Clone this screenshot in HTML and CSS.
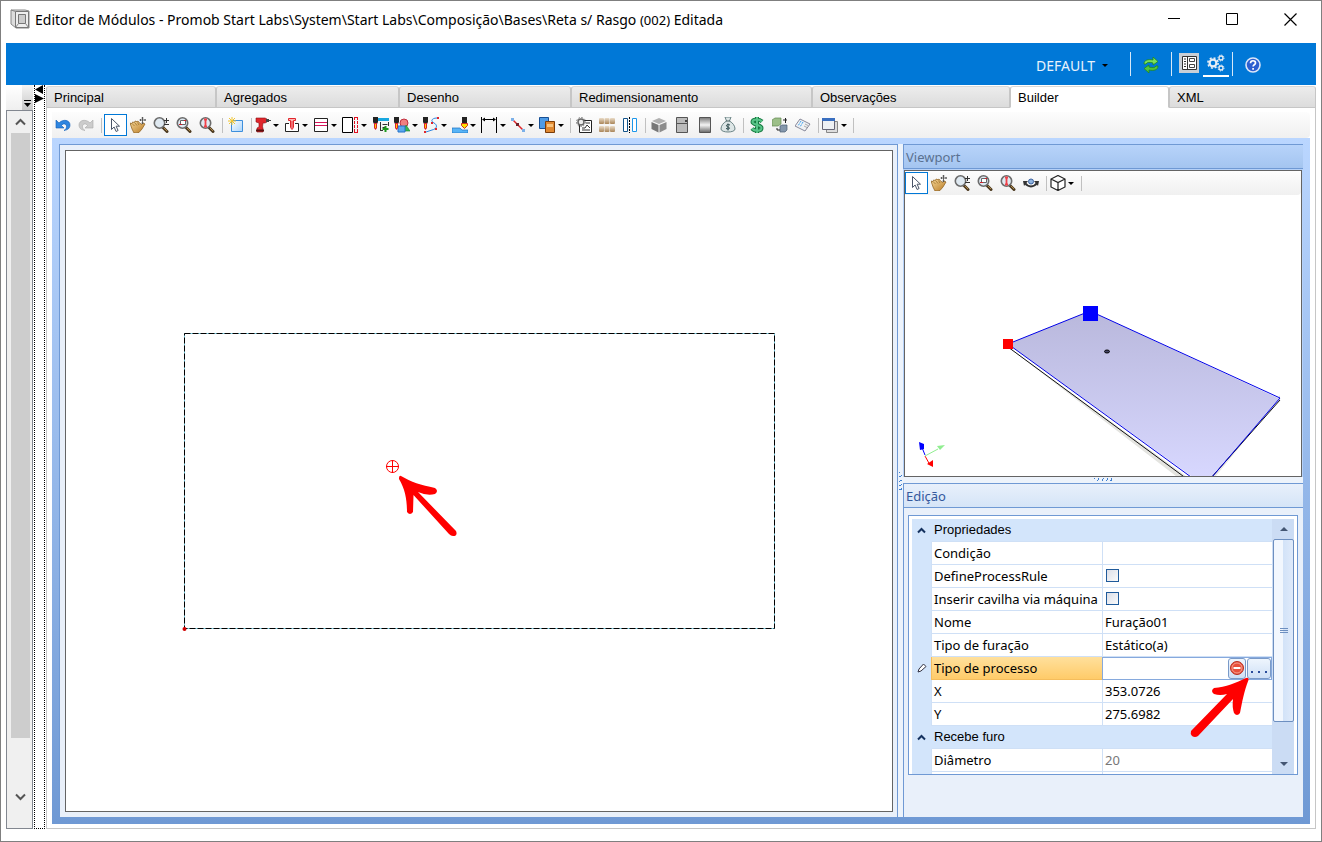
FILE: index.html
```html
<!DOCTYPE html>
<html lang="pt-BR">
<head>
  <meta charset="UTF-8">
  <meta name="viewport" content="width=device-width, initial-scale=1.0">
  <title>Editor de Módulos</title>
  <link rel="stylesheet" href="styles.css">
</head>
<body>
  <!-- ícones usados nas duas barras -->
  <svg class="defs" width="0" height="0" aria-hidden="true">
    <defs>
      <linearGradient id="plate" x1="0" y1="0" x2="0" y2="1">
        <stop offset="0" stop-color="#b9b8dc"/>
        <stop offset="1" stop-color="#d8d8ff"/>
      </linearGradient>
      <linearGradient id="metal" x1="0" y1="0" x2="0" y2="1">
        <stop offset="0" stop-color="#777"/>
        <stop offset=".5" stop-color="#f4f4f4"/>
        <stop offset="1" stop-color="#666"/>
      </linearGradient>
      <linearGradient id="skin" x1="0" y1="0" x2="1" y2="1">
        <stop offset="0" stop-color="#f7d99a"/>
        <stop offset="1" stop-color="#b87a24"/>
      </linearGradient>
      <linearGradient id="sky" x1="0" y1="0" x2="1" y2="1">
        <stop offset="0" stop-color="#fff"/>
        <stop offset="1" stop-color="#a9d4fb"/>
      </linearGradient>
      <linearGradient id="box" x1="0" y1="0" x2="0" y2="1">
        <stop offset="0" stop-color="#eadcc8"/>
        <stop offset="1" stop-color="#a98558"/>
      </linearGradient>
      <symbol id="i-cursor" viewBox="0 0 16 16">
        <path d="M4.500 1.500v11l2.600-2.500 2 4.500 2-1-2-4.300h3.400z" fill="#fff" stroke="#4a5568"/>
      </symbol>
      <symbol id="i-hand" viewBox="0 0 16 16">
        <path d="M0 6l2 .8L2.500 5l2 .5.500-1.500 2 .7 1-.7 1.500 2 2.500 1.500 1.500-1.500 1.500 1-3 5-3 3.500-5 .5L2 12z" fill="url(#skin)" stroke="#8a5a16" stroke-width=".7"/>
        <path d="M2.500 7l2 2M5 6l2 2.500M7.500 5.500l1.500 2.500" stroke="#8a5a16" stroke-width=".6"/>
        <path d="M12.500 0v7M9.500 3h6.500M11.500 1h2M11.500 6h2M10.500 2v2M15 2v2" stroke="#444" fill="none" stroke-width=".8"/>
      </symbol>
      <symbol id="i-lens" viewBox="0 0 16 16">
        <path d="M10 10.500l4 4" stroke="#4c3a20" stroke-width="3" stroke-linecap="round"/>
        <path d="M11 11l3 3" stroke="#b08a4a" stroke-width="1"/>
        <circle cx="6.500" cy="6" r="5.200" fill="#dfe9f1" stroke="#6c6c6c" stroke-width="1.600"/>
      </symbol>
      <symbol id="i-zoom" viewBox="0 0 16 16">
        <use href="#i-lens"/>
        <path d="M11 3.500h5M13.500 1v5M11 7.500h5" stroke="#333"/>
      </symbol>
      <symbol id="i-zoomwin" viewBox="0 0 16 16">
        <use href="#i-lens"/>
        <path d="M4.500 3.500h5v4h-5z" fill="#fff" stroke="#666"/>
        <path d="M3 7.500h3M8 3.500h2" stroke="#d3202a"/>
      </symbol>
      <symbol id="i-zoomh" viewBox="0 0 16 16">
        <use href="#i-lens"/>
        <path d="M6.500 2v8M5 2.500h3M5 9.500h3" stroke="#f04048" stroke-width="1.800"/>
      </symbol>
      <symbol id="i-bit" viewBox="0 0 16 16">
        <path d="M0 0h5v5l-1 2H1L0 5z" fill="#222"/>
        <path d="M1 6h3v5l-1.500 2L1 11z" fill="#d8202a"/>
        <path d="M2.500 7v4" stroke="#ffd200"/>
      </symbol>
    </defs>
  </svg>

  <div class="window">
    <header class="titlebar">
      <svg class="logo" width="20" height="20" viewBox="0 0 20 20">
        <path d="M1 1h14l4 1v17H6l-5-4z" fill="#ddd" stroke="#888"/>
        <path d="M5.500 2.500h13v16h-13z" fill="#eee" stroke="#777"/>
        <path d="M8.500 5.500h7v9h-7z" fill="#ccc" stroke="#777"/>
        <path d="M8.500 14.500l-3 4M15.500 14.500l3 4M1 1l4.500 1.500" stroke="#888"/>
      </svg>
      <h1>Editor de Módulos - Promob Start Labs\System\Start Labs\Composição\Bases\Reta s/ Rasgo <small>(002)</small> Editada</h1>
      <div class="caption">
        <button aria-label="Minimizar"><svg width="13" height="13"><path d="M0 5.500h12" stroke="#000"/></svg></button>
        <button aria-label="Maximizar"><svg width="13" height="13"><path d="M.5.500h11v11H.5z" fill="none" stroke="#000"/></svg></button>
        <button aria-label="Fechar"><svg width="13" height="13"><path d="M.5.500l12 12M12.500.500l-12 12" stroke="#000" stroke-width="1.200"/></svg></button>
      </div>
    </header>

    <div class="appbar">
      <button class="profile low">DEFAULT <i class="caret"></i></button>
      <span class="divider"></span>
      <button class="appbtn refresh low" aria-label="Atualizar">
        <svg width="18" height="16" viewBox="0 0 18 16">
          <path d="M2 7c0-4 4-5 9-4V0l5 4.500L11 8V6C8 5 5 5 4 7z" fill="#7be05a" stroke="#1f8a1c" stroke-width=".8"/>
          <path d="M16 9c0 4-4 5-9 4v3l-5-4.500L7 8v2c3 1 6 1 7-1z" fill="#52c43c" stroke="#1f8a1c" stroke-width=".8"/>
        </svg>
      </button>
      <span class="divider"></span>
      <button class="appbtn panel" aria-label="Painel">
        <svg width="20" height="20" viewBox="0 0 20 20">
          <path d="M0 0h20v20H0z" fill="#c9cfd6"/>
          <path d="M3.500 3.500h14v13h-14zM8.500 3.500v13" fill="#fff" stroke="#333"/>
          <path d="M5 6h2M5 8.500h2M5 11h2M5 13.500h2" stroke="#333"/>
          <path d="M10.500 5.500h5v3h-5zM10.500 11.500h5v3h-5z" fill="none" stroke="#444"/>
        </svg>
      </button>
      <button class="appbtn active" aria-label="Configurações">
        <svg width="18" height="18" viewBox="0 0 18 18" fill="none" stroke="#e8eef5">
          <circle cx="6" cy="9" r="3.400" stroke-width="2.200"/>
          <circle cx="6" cy="9" r="5.100" stroke-width="1.600" stroke-dasharray="2 2.005"/>
          <circle cx="14" cy="4" r="2" stroke-width="1.300"/>
          <circle cx="14" cy="4" r="3" stroke-dasharray="1.200 1.150"/>
          <circle cx="14" cy="14" r="2" stroke-width="1.300"/>
          <circle cx="14" cy="14" r="3" stroke-dasharray="1.200 1.150"/>
        </svg>
      </button>
      <span class="divider"></span>
      <button class="appbtn low" aria-label="Ajuda">
        <svg width="16" height="16" viewBox="0 0 16 16">
          <circle cx="8" cy="8" r="7" fill="#2d5fd0" stroke="#dce6f8" stroke-width="1.600"/>
          <path d="M5.500 6.200c0-3.200 5-3.200 5-.3 0 1.800-2.400 1.800-2.400 3.600M8.100 11v1.800" fill="none" stroke="#fff" stroke-width="1.700"/>
        </svg>
      </button>
    </div>

    <div class="body">
      <aside class="sidebar">
        <div class="side-top"><button aria-label="Opções"><svg width="9" height="9"><path d="M1 1.500h7" stroke="#000"/><path d="M1 4h7L4.500 8z"/></svg></button></div>
        <div class="side-scroll">
          <button aria-label="Subir"><svg width="11" height="8"><path d="M1 6.500l4.500-4.500L10 6.500" fill="none" stroke="#555" stroke-width="2"/></svg></button>
          <div class="side-thumb"></div>
          <button aria-label="Descer"><svg width="11" height="8"><path d="M1 1.500L5.500 6 10 1.500" fill="none" stroke="#555" stroke-width="2"/></svg></button>
        </div>
      </aside>
      <div class="side-splitter">
        <svg width="9" height="18"><path d="M8 0v9L0 4.500zM0 9v9l9-4.500z"/></svg>
      </div>

      <main class="main">
        <nav class="tabs">
          <button>Principal</button>
          <button>Agregados</button>
          <button>Desenho</button>
          <button>Redimensionamento</button>
          <button>Observações</button>
          <button class="current">Builder</button>
          <button>XML</button>
        </nav>

        <div class="page">
          <div class="toolbar">
            <button aria-label="Desfazer"><svg width="16" height="16"><path d="M1 3v8h8L6.500 8.500c1.500-2.500 5-2 5 1 0 2-1 3-2.500 4 4-.5 6-2.500 6-5.500 0-5-7-6.500-11-2z" fill="#2f86e0" stroke="#0d5cb6" stroke-width=".6"/></svg></button>
            <button aria-label="Refazer"><svg width="16" height="16"><path d="M15 3v8H7l2.500-2.500c-1.500-2.500-5-2-5 1 0 2 1 3 2.500 4-4-.5-6-2.500-6-5.500 0-5 7-6.500 11-2z" fill="#ccc" stroke="#aaa" stroke-width=".6"/></svg></button>
            <span class="sep"></span>
            <button class="pressed" aria-label="Selecionar"><svg width="16" height="16"><use href="#i-cursor"/></svg></button>
            <button aria-label="Mover"><svg width="16" height="16"><use href="#i-hand"/></svg></button>
            <button aria-label="Zoom"><svg width="16" height="16"><use href="#i-zoom"/></svg></button>
            <button aria-label="Zoom janela"><svg width="16" height="16"><use href="#i-zoomwin"/></svg></button>
            <button aria-label="Zoom total"><svg width="16" height="16"><use href="#i-zoomh"/></svg></button>
            <span class="sep"></span>
            <button aria-label="Novo"><svg width="16" height="16"><path d="M3.500 3.500h11v11h-11z" fill="url(#sky)" stroke="#3d8fdc"/><path d="M4 0v8M0 4h8M1 1l6 6M7 1L1 7" stroke="#f0c530"/></svg></button>
            <span class="sep"></span>
            <button class="drop" aria-label="Furação"><svg width="16" height="16"><path d="M1 1h9l2 1v3l-2 1H8l-.5 4 .5 1v4H2v-4l2-1V6L1 5z" fill="#e0262c" stroke="#8c1014" stroke-width=".6"/><path d="M11 2h3v3h-3z" fill="#444"/><path d="M14 3.500h2" stroke="#444"/><path d="M1 13.500h8" stroke="#5a1010" stroke-width="2"/></svg><i class="caret"></i></button>
            <button class="drop" aria-label="Cavilha"><svg width="16" height="16"><path d="M5 6.500H1.500v8h13v-8H11" fill="#fff" stroke="#222"/><path d="M4.500 1.500h7v2h-2v7l-1.500 2-1.500-2v-7h-2z" fill="#ffb4b4" stroke="#e0262c"/><path d="M8 4v7" stroke="#e0262c"/></svg><i class="caret"></i></button>
            <button class="drop" aria-label="Camadas"><svg width="16" height="16"><path d="M1.500 1.500h13v13h-13z" fill="#fff" stroke="#222"/><path d="M2 5.500h12M2 8.500h12" stroke="#d6145a"/></svg><i class="caret"></i></button>
            <button class="drop" aria-label="Borda"><svg width="17" height="16"><path d="M.5.500h10v15H.5z" fill="#fff" stroke="#000"/><path d="M12.500 0v16M15.500 0v16" stroke="#e01020" stroke-dasharray="3 1"/><path d="M12 .5h4M12 15.500h4" stroke="#e01020"/></svg><i class="caret"></i></button>
            <button aria-label="Adicionar usinagem"><svg width="16" height="16"><path d="M5 1h11v3H5z" fill="#18a8e0"/><path d="M7.500 5v9M7 13.500h3M9.500 7.500h5M9.500 10.500h3M15.500 5v4" stroke="#333" fill="none"/><path d="M12.500 9v6M9.500 12h6" stroke="#1c9a1c" stroke-width="2"/><use href="#i-bit" width="16" height="16"/></svg></button>
            <button class="drop" aria-label="Formas"><svg width="16" height="16"><circle cx="10" cy="6" r="4" fill="#f08080" stroke="#c03040"/><path d="M12 8l4 6H9z" fill="#38b850" stroke="#168030" stroke-width=".6"/><path d="M4 9h7v6H4z" fill="#5aa9ee" stroke="#2270c8"/><use href="#i-bit" width="16" height="16"/></svg><i class="caret"></i></button>
            <button class="drop" aria-label="Caminho"><svg width="16" height="16"><path d="M14 1c-5 0-7 3-3 5s3 6-2 7l-6 2" fill="none" stroke="#2f86e0"/><path d="M14 0h2v2h-2zM12 11h2v2h-2zM1 14h2v2H1zM8 5h2v2H8z" fill="#e0262c"/><use href="#i-bit" width="16" height="16"/></svg><i class="caret"></i></button>
            <button class="drop" aria-label="Rebaixo"><svg width="16" height="16"><path d="M0 11h8l2 2h6v3H0z" fill="#58b4f6" stroke="#1b70c0" stroke-width=".7"/><path d="M10 0h5v6h-5z" fill="#222"/><path d="M9.500 6.500h6v2l-3 3-3-3z" fill="#ffe000" stroke="#d03020"/></svg><i class="caret"></i></button>
            <button class="drop" aria-label="Cota"><svg width="17" height="16"><path d="M.5 0v16M15.500 0v16M2 2.500h12" stroke="#000"/><path d="M1 2.500l3-2v4zM15 2.500l-3-2v4z"/></svg><i class="caret"></i></button>
            <button class="drop" aria-label="Linha"><svg width="16" height="16"><path d="M3 3l10 10" stroke="#e0262c" stroke-width="1.500"/><path d="M1 1h3v3H1zM12 12h3v3h-3z" fill="#7bb0e8"/><path d="M6 6h3v3H6z" fill="#702028"/></svg><i class="caret"></i></button>
            <button class="drop" aria-label="Copiar"><svg width="17" height="16"><path d="M.5.500h9v11h-9z" fill="#4e9be6" stroke="#174f94"/><path d="M6.500 4.500h9v11h-9z" fill="#e08830" stroke="#7a3c08"/><path d="M8 7h6v3H8z" fill="#f7c27c"/></svg><i class="caret"></i></button>
            <span class="sep"></span>
            <button aria-label="Configurar relatório"><svg width="16" height="16"><path d="M3.500 3.500h12v12h-12z" fill="#fff" stroke="#222"/><path d="M6 13h8M6 11h3l2-3 3 3M10 6h4" stroke="#333" fill="none"/><circle cx="5" cy="5" r="3" fill="#eee" stroke="#666" stroke-width="1.500"/><circle cx="5" cy="5" r="4.500" fill="none" stroke="#777" stroke-dasharray="1.500 1.500"/></svg></button>
            <button aria-label="Componentes"><svg width="16" height="16" fill="url(#box)"><rect y="1" width="5" height="6" rx="1"/><rect x="5.500" y="1" width="5" height="6" rx="1"/><rect x="11" y="1" width="5" height="6" rx="1"/><rect y="9" width="5" height="6" rx="1"/><rect x="5.500" y="9" width="5" height="6" rx="1"/><rect x="11" y="9" width="5" height="6" rx="1"/></svg></button>
            <button aria-label="Espelhar"><svg width="16" height="16"><path d="M1.500 1.500h4v13h-4z" fill="#fff" stroke="#14558c"/><path d="M10.500 1.500h4v13h-4z" fill="#fff" stroke="#1c97ea"/><path d="M7.500 0v16" stroke="#000" stroke-dasharray="2 1"/></svg></button>
            <span class="sep"></span>
            <button aria-label="Módulo 3D"><svg width="16" height="16"><path d="M8 1l7 3-7 3-7-3z" fill="#b0b0b0"/><path d="M.5 5L7.500 8v7.500L.5 12z" fill="#777"/><path d="M15.500 5l-7 3v7.500l7-3.500z" fill="#8c8c8c"/></svg></button>
            <button aria-label="Porta"><svg width="16" height="16"><path d="M2.500.500h11v15h-11z" fill="#bbb" stroke="#555"/><path d="M3 6.500h10" stroke="#555"/><path d="M11 3h2v2h-2z" fill="#444"/></svg></button>
            <button aria-label="Cilindro"><svg width="16" height="16"><path d="M2.500.500h11v15h-11z" fill="url(#metal)" stroke="#555"/></svg></button>
            <button aria-label="Custo"><svg width="16" height="16"><path d="M5 0h6L9.500 4C13 6 15 9 15 12c0 4-14 4-14 0 0-3 2-6 5.500-8z" fill="#dde6e6" stroke="#6a8284"/><path d="M6 4h4" stroke="#486062"/><path d="M10 8c-4-1.500-4.500 1.500-2 2s2 3-2 1.500M8 6.500v7" fill="none" stroke="#28464a"/></svg></button>
            <span class="sep"></span>
            <button aria-label="Preço"><svg width="16" height="16"><path d="M13 4.500C10 1.500 3.500 2 3.500 5s9 2.500 9 6-7 3.500-9.500.5M8 0v16" fill="none" stroke="#167a40" stroke-width="4"/><path d="M13 4.500C10 1.500 3.500 2 3.500 5s9 2.500 9 6-7 3.500-9.500.5M8 0v16" fill="none" stroke="#58c488" stroke-width="2"/></svg></button>
            <button aria-label="Trocar"><svg width="16" height="16"><path d="M0 3l3-2h6v6L6 9H0z" fill="#9cbf88" stroke="#638850" stroke-width=".7"/><path d="M8 9l2-1h5v5l-2 2H8z" fill="#8497ac" stroke="#4c5e72" stroke-width=".7"/><path d="M11 3h4M13.500 1v5M5 11v2h3" stroke="#222" fill="none"/></svg></button>
            <button aria-label="Etiqueta"><svg width="16" height="16"><path d="M5 2l10 5-5 7L0 9z" fill="#eef1f4" stroke="#889"/><path d="M6 4l-3 5M8 5l-3 5" stroke="#39a0f0" stroke-dasharray="2 1"/><path d="M10 7l3 1.500M9 9l3 1.500" stroke="#aaa"/></svg></button>
            <span class="sep"></span>
            <button class="drop" aria-label="Janelas"><svg width="17" height="16"><path d="M4.500 4.500h11v11h-11z" fill="#ddd" stroke="#888"/><path d="M.5 1.500h12v11H.5z" fill="#eef1f5" stroke="#667"/><path d="M0 1h13v3H0z" fill="#3a6fc0"/></svg><i class="caret"></i></button>
            <span class="sep"></span>
          </div>

          <div class="workspace">
            <section class="document">
              <div class="canvas">
                <svg width="100%" height="100%">
                  <path d="M118.500 182.500h590v295h-590z" fill="none" stroke="#7fd0e4"/>
                  <path d="M118.500 182.500h590v295h-590z" fill="none" stroke="#000" stroke-dasharray="6 2"/>
                  <circle cx="118.500" cy="478" r="2" fill="#d00000"/>
                  <g fill="none" stroke="#f00">
                    <circle cx="326.500" cy="315.500" r="6"/>
                    <path d="M320 315.500h13M326.500 309v13"/>
                  </g>
                  <path d="M335 325C345 331 355 334 369 337q4 3 0 6-8 2-17-2l38 39q2 5-3 5-2 0-4-2l-35.500-39-.5 17q-3 4-6 0C341 348 339 338 333 328q0-4 2-3z" fill="#f00"/>
                </svg>
              </div>
            </section>

            <div class="split-v"><i class="grip"></i></div>

            <div class="docked">
              <section class="viewport">
                <h2>Viewport</h2>
                <div class="view">
                  <div class="toolbar">
                    <button class="pressed" aria-label="Selecionar"><svg width="16" height="16"><use href="#i-cursor"/></svg></button>
                    <button aria-label="Mover"><svg width="16" height="16"><use href="#i-hand"/></svg></button>
                    <button aria-label="Zoom"><svg width="16" height="16"><use href="#i-zoom"/></svg></button>
                    <button aria-label="Zoom janela"><svg width="16" height="16"><use href="#i-zoomwin"/></svg></button>
                    <button aria-label="Zoom total"><svg width="16" height="16"><use href="#i-zoomh"/></svg></button>
                    <button aria-label="Órbita"><svg width="16" height="16"><path d="M2 8c3 4.500 9 4.500 12 0" fill="none" stroke="#333" stroke-width="2"/><path d="M0 6l5 0-4 5zM16 6h-5l4 5z" fill="#333"/><circle cx="8" cy="6.500" r="2.500" fill="#8fb4e0" stroke="#3b62a0"/></svg></button>
                    <span class="sep"></span>
                    <button class="drop" aria-label="Vista"><svg width="16" height="16"><path d="M8 .5l7 3.500v8l-7 3.500L1 12V4zM1 4l7 3.500L15 4M8 7.500v8" fill="#fff" stroke="#222" stroke-width="1.200"/></svg><i class="caret"></i></button>
                    <span class="sep"></span>
                  </div>
                  <svg class="scene" width="100%" height="100%">
                    <path d="M103 152l182 132h20l70-84v3l-70 85h-25z" fill="#e4e4e0"/>
                    <path d="M103 149l82-33 190 88-72 82h-10z" fill="url(#plate)"/>
                    <path d="M103 152l179 132M375 205l-70 79" fill="none" stroke="#111"/>
                    <path d="M286 282L103 149l82-33 190 87-68 79" fill="none" stroke="#0000e8"/>
                    <path d="M178 111h15v15h-15z" fill="#00f"/>
                    <path d="M98 144h10v10H98z" fill="#f00"/>
                    <ellipse cx="202" cy="156.500" rx="2.500" ry="1.500" fill="#446" stroke="#000"/>
                    <path d="M20 260l-4-10" stroke="#00f"/><path d="M14 247l5 2v5l-4 1z" fill="#00f"/>
                    <path d="M20 261l5 9" stroke="#f00"/><path d="M28 265v7l-6-3z" fill="#f00"/>
                    <path d="M20 261l13-7" stroke="#90ee90"/><path d="M40 250l-5 5-3-4z" fill="#90ee90"/>
                  </svg>
                </div>
              </section>

              <div class="split-h"><i class="grip"></i></div>

              <section class="edit">
                <h2>Edição</h2>
                <div class="edit-body">
                  <div class="props">
                    <div class="props-list">
                      <table>
                        <colgroup><col class="gutter"><col class="name"><col></colgroup>
                        <tbody>
                          <tr class="group"><td><svg width="9" height="7"><path d="M1 5.500l3.500-3.500L8 5.500" fill="none" stroke="#15325f" stroke-width="2"/></svg></td><th colspan="2">Propriedades</th></tr>
                          <tr><td></td><th><label for="cond">Condição</label></th><td><input id="cond" type="text"></td></tr>
                          <tr><td></td><th><label for="rule">DefineProcessRule</label></th><td><input id="rule" type="checkbox"></td></tr>
                          <tr><td></td><th><label for="dowel">Inserir cavilha via máquina</label></th><td><input id="dowel" type="checkbox"></td></tr>
                          <tr><td></td><th><label for="nome">Nome</label></th><td><input id="nome" type="text" value="Furação01"></td></tr>
                          <tr><td></td><th><label for="tipo">Tipo de furação</label></th><td><input id="tipo" type="text" value="Estático(a)"></td></tr>
                          <tr class="selected">
                            <td><svg width="10" height="10"><path d="M1 9l1-3 4.500-5L9 3.500 4 8z" fill="#fff" stroke="#334"/></svg></td>
                            <th><label for="proc">Tipo de processo</label></th>
                            <td>
                              <div class="editor">
                                <input id="proc" type="text">
                                <button class="clear" aria-label="Remover"><svg width="14" height="14"><circle cx="7" cy="7" r="6.500" fill="#e8503c" stroke="#b83020"/><circle cx="7" cy="7" r="5" fill="none" stroke="#f7a090"/><path d="M3.500 7h7" stroke="#fff" stroke-width="2"/></svg></button>
                                <button class="more" aria-label="Procurar"><svg width="18" height="16"><path d="M1 11h2v2H1zM8 11h2v2H8zM15 11h2v2h-2z" fill="#2a4c9c"/></svg></button>
                                <svg class="pointer" width="64" height="64"><path d="M60 3q3-1 2.500 2C58 16 56 28 54 38q-3 4-6 0-2-6-1-14L12 61q-3 2-6 0-2-2-1-5l36-37q-7 2-13 0-4-3 0-6C40 12 50 8 60 3z" fill="#f00"/></svg>
                              </div>
                            </td>
                          </tr>
                          <tr><td></td><th><label for="px">X</label></th><td><input id="px" type="text" value="353.0726"></td></tr>
                          <tr><td></td><th><label for="py">Y</label></th><td><input id="py" type="text" value="275.6982"></td></tr>
                          <tr class="group"><td><svg width="9" height="7"><path d="M1 5.500l3.500-3.500L8 5.500" fill="none" stroke="#15325f" stroke-width="2"/></svg></td><th colspan="2">Recebe furo</th></tr>
                          <tr><td></td><th><label for="diam">Diâmetro</label></th><td><input id="diam" type="text" value="20" disabled></td></tr>
                          <tr><td></td><th></th><td></td></tr>
                        </tbody>
                      </table>
                    </div>
                    <div class="props-scroll">
                      <button aria-label="Subir"><svg width="8" height="4"><path d="M0 4l4-4 4 4z" fill="#445673"/></svg></button>
                      <div class="props-thumb"><i></i></div>
                      <button aria-label="Descer"><svg width="8" height="4"><path d="M0 0l4 4 4-4z" fill="#445673"/></svg></button>
                    </div>
                  </div>
                </div>
              </section>
            </div>
          </div>
        </div>
      </main>
    </div>
  </div>
</body>
</html>
```
FILE: styles.css
```css
* { box-sizing: border-box; margin: 0; padding: 0; }

body {
  font-family: 'Noto Sans', sans-serif;
  font-size: 13px;
  color: #000;
  background: #fff;
}

button {
  font: inherit;
  color: inherit;
  background: none;
  border: none;
  display: flex;
  align-items: center;
  justify-content: center;
}

svg { display: block; flex: none; }
.defs { position: absolute; }

.window {
  display: flex;
  flex-direction: column;
  height: 100vh;
  min-height: 640px;
  padding: 0 5px 12px;
  border: 1px solid #7f7f7f;
}

/* barra de título */
.titlebar {
  display: flex;
  align-items: center;
  height: 42px;
  padding: 0 4px 6px;
}

.titlebar h1 {
  flex: 1;
  margin-left: 5px;
  font-size: 14px;
  font-weight: normal;
  white-space: nowrap;
}

.titlebar small { font-size: 13px; }

.caption { display: flex; }
.caption button { width: 58px; height: 30px; }
.caption button:last-child { width: 46px; margin-left: 6px; margin-right: -1px; }

/* barra azul */
.appbar {
  display: flex;
  align-items: center;
  justify-content: flex-end;
  height: 42px;
  padding-right: 50px;
  background: #0078d7;
  color: #fff;
}

.profile { font-size: 14px; gap: 7px; margin-right: 22px; color: #e8f2fc; }

.divider { width: 1px; height: 24px; background: #d6e8f8; }

.appbtn { width: 26px; height: 26px; margin-left: 1px; border-bottom: 2px solid transparent; }
.divider + .appbtn { margin-left: 7px; }
.divider + .panel { margin-left: 4px; }
.refresh { margin-right: 7px; }
.active { margin-right: 3px; border-bottom-color: #fff; }
.low { padding-top: 3px; }

.caret {
  border: 3px solid transparent;
  border-top-color: #000;
  border-bottom: none;
}

/* coluna esquerda */
.body { display: flex; flex: 1; min-height: 0; }

.sidebar { display: flex; flex-direction: column; width: 27px; }

.side-top {
  display: flex;
  justify-content: flex-end;
  height: 25px;
  background: linear-gradient(#fff, #efefef);
}
.side-top button { width: 11px; padding-top: 12px; background: linear-gradient(#f4f4f4, #c8c8c8); }

.side-scroll {
  display: flex;
  flex-direction: column;
  flex: 1;
  padding-left: 4px;
  padding-right: 2px;
  border: 1px solid #828790;
  background: #f0f0f0;
}
.side-scroll button { height: 22px; }
.side-scroll button:last-child { margin-bottom: 20px; }
.side-thumb { flex: 1; margin-bottom: 48px; background: #cdcdcd; }

.side-splitter {
  width: 11px;
  margin: 0 1px;
  border: 1px dotted #000;
  border-top: none;
}

/* abas */
.main { display: flex; flex-direction: column; flex: 1; min-width: 0; }

.tabs {
  display: grid;
  grid-template-columns: 170fr 183fr 172fr 241fr 198fr 159fr 147fr;
  height: 23px;
  padding-top: 1px;
  font-family: 'Liberation Sans', sans-serif;
  font-size: 13px;
}

.tabs button {
  justify-content: flex-start;
  padding-left: 7px;
  padding-top: 1px;
  border: 1px solid #c6c6c6;
  border-top-color: #d8d8d8;
  border-radius: 3px 3px 0 0;
  background: linear-gradient(#ececec, #dcdcdc);
}
.tabs .current { background: #fff; border-bottom-color: #fff; }

.page {
  display: flex;
  flex-direction: column;
  flex: 1;
  min-height: 0;
  padding: 4px 5px;
  border: 1px solid #c6c6c6;
  border-top: none;
}

/* barras de ferramentas */
.toolbar {
  display: flex;
  align-items: center;
  height: 26px;
  border-radius: 0 4px 4px 0;
  background: linear-gradient(#fdfdfd, #f0f0f0);
}
.toolbar button { width: 23px; height: 22px; padding-right: 1px; }
.toolbar .drop { width: 29px; gap: 2px; padding: 0 0 0 1px; justify-content: flex-start; }
.toolbar .pressed { border: 1px solid #0078d7; background: #fff; }
.toolbar .sep { width: 1px; height: 15px; margin: 0 2px 0 3px; background: #c0c0c0; }

/* área de trabalho */
.workspace {
  display: flex;
  flex: 1;
  min-height: 0;
  padding: 6px 7px 7px;
  background: linear-gradient(#bad6ff, #6f99d4);
}

.document {
  flex: 1;
  min-width: 0;
  padding: 5px 4px 5px 5px;
  border: 1px solid #6f99d4;
  border-bottom: none;
  background: #e9f0fa;
}
.canvas { height: 100%; border: 1px solid #646464; background: #fff; }

.split-v, .split-h {
  display: flex;
  align-items: center;
  justify-content: center;
  background: #edf3fb;
}
.split-v { width: 5px; }
.split-h { height: 6px; }

.grip {
  width: 18px;
  height: 3px;
  background: repeating-linear-gradient(115deg, #3f7fd0 0 1px, transparent 1px 4px);
}
.split-v .grip { width: 3px; height: 18px; background: repeating-linear-gradient(155deg, #3f7fd0 0 1px, transparent 1px 4px); }

.docked { display: flex; flex-direction: column; width: 400px; }

.docked h2 {
  height: 25px;
  padding-left: 2px;
  font-size: 13px;
  font-weight: normal;
  line-height: 24px;
  border: 1px solid #6f99d4;
  border-right: none;
}

.viewport, .edit { display: flex; flex-direction: column; min-height: 0; }
.viewport { flex: 332; background: #b5d1f8; }
.edit { flex: 334; }
.viewport h2 { color: #5a7190; background: linear-gradient(#b7d3fa, #a4c5f0); }
.edit h2 { color: #34589c; background: linear-gradient(#e8f0fb, #d5e4f7); }

.view {
  flex: 1;
  min-height: 0;
  overflow: hidden;
  margin: 1px 1px 0 1px;
  border: 1px solid #646464;
  background: #fff;
}
.view .toolbar { height: 24px; }

.edit-body {
  flex: 1;
  padding: 7px 5px 7px 4px;
  border-left: 1px solid #6f99d4;
  background: #e9f0fa;
}

/* grade de propriedades */
.props {
  display: flex;
  height: 260px;
  padding: 3px 3px 0;
  border: 1px solid #6f99d4;
  background: #fff;
}

.props-list { flex: 1; overflow: hidden; }

.props table {
  width: 100%;
  table-layout: fixed;
  border-collapse: separate;
  border-spacing: 0;
}
.props .gutter { width: 19px; }
.props .name { width: 171px; }

.props tr { height: 23px; }

.props th, .props td {
  height: 23px;
  font-weight: normal;
  text-align: left;
  white-space: nowrap;
  line-height: 20px;
  border-left: 1px solid #cfe0f6;
  border-bottom: 1px solid #cfe0f6;
}
.props th { padding-left: 2px; }
.props td:first-child { border: none; background: #d3e5fb; }
.props td:first-child svg { margin: 0 auto; }

.props .group th {
  font-family: 'Liberation Sans', sans-serif;
  border-left-color: #d3e5fb;
  background: #d3e5fb;
}

.props .selected th { background: linear-gradient(#ffe09c, #ffcb69); border-color: #f5bd5c; }
.props .selected td:last-child { border: 1px solid #86a9dd; }

.props input[type="text"] {
  width: 100%;
  height: 20px;
  padding-left: 2px;
  font: inherit;
  color: inherit;
  border: none;
  background: none;
  display: block;
}
.props input:disabled { color: #777; }

.props input[type="checkbox"] {
  appearance: none;
  display: block;
  width: 13px;
  height: 13px;
  margin-left: 3px;
  border: 1px solid #1f5a9a;
  background: linear-gradient(135deg, #dcdfe8, #fafafa);
}

.editor { display: flex; gap: 1px; height: 21px; position: relative; }
.editor input { flex: 1; min-width: 0; }
.editor button { border: 1px solid #7a9ac8; border-radius: 3px; background: linear-gradient(#eef5fd, #cfe0f6); }
.clear { width: 18px; }
.more { width: 24px; }

/* seta de destaque sobre o botão "..." */
.pointer { position: absolute; top: 17px; right: 21px; pointer-events: none; }

.props-scroll {
  display: flex;
  flex-direction: column;
  width: 22px;
  padding-left: 1px;
  background: #cbdcf4;
}
.props-scroll button { height: 20px; }

.props-thumb {
  display: flex;
  align-items: center;
  justify-content: center;
  flex: 1;
  margin-bottom: 32px;
  border: 1px solid #6d8fc0;
  border-radius: 2px;
  background: linear-gradient(90deg, #f2f7fe 50%, #d3e3f8 50%, #dfeafa);
}
.props-thumb i {
  width: 8px;
  height: 5px;
  border-top: 1px solid #6d8fc0;
  border-bottom: 1px solid #6d8fc0;
  background: linear-gradient(transparent 1px, #6d8fc0 1px 2px, transparent 2px);
}
```
